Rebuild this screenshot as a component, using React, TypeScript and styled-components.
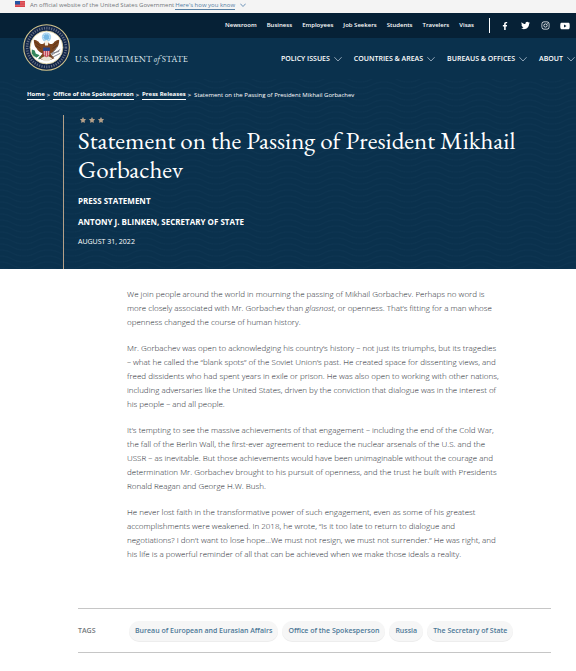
import React from "react";
import styled, { createGlobalStyle } from "styled-components";
import { FaFacebookF, FaTwitter, FaInstagram, FaYoutube, FaStar } from "react-icons/fa";

const waves = encodeURIComponent(
  `<svg xmlns="http://www.w3.org/2000/svg" width="48" height="18" fill="none" stroke="#143c5a" stroke-opacity=".3"><path d="M0 3C12 3 12 9 24 9S36 3 48 3M0 9C12 9 12 15 24 15S36 9 48 9M0 15C12 15 12 21 24 21S36 15 48 15M0-3C12-3 12 3 24 3S36-3 48-3"/></svg>`
);

const GlobalStyle = createGlobalStyle`
  * { box-sizing: border-box; }
  body {
    margin: 0;
    background: #fff;
    color: #24282f;
    font-family: "Open Sans", "Noto Sans", sans-serif;
  }
  a { color: inherit; }
`;

const Banner = styled.div`
  display: flex;
  align-items: center;
  height: 13px;
  padding: 0 15px 3px;
  background: #f4f4f4;
  color: #71767a;
  font-size: 6px;
  line-height: 8px;
`;

const Flag = styled.svg`
  width: 10px;
  height: 6px;
  margin: 0 5px 2px 0;
`;

const BannerButton = styled.button`
  display: flex;
  align-items: center;
  gap: 5px;
  margin-left: 1px;
  padding: 0;
  border: 0;
  background: none;
  color: #5580a5;
  font: inherit;
  span { box-shadow: 0 1px 0 #5580a5; line-height: 7px; }
`;

const Header = styled.header`
  position: relative;
  color: #fff;
`;

const UtilityBar = styled.div`
  display: flex;
  justify-content: flex-end;
  align-items: center;
  height: 25px;
  padding-right: 7px;
  background: #062136;
`;

const UtilityNav = styled.nav`
  display: flex;
  gap: 10px;
  padding-bottom: 1px;
  font-size: 6px;
  font-weight: 600;
  a { text-decoration: none; }
`;

const Social = styled.div`
  display: flex;
  align-items: center;
  height: 15px;
  gap: 12px;
  margin-left: 15px;
  padding-left: 11px;
  border-left: 1px solid #fff;
  a { display: flex; justify-content: center; width: 8px; }
  svg { flex: none; }
`;

const SealLink = styled.a`
  position: absolute;
  top: 11px;
  left: 23px;
  display: flex;
`;

const MainBar = styled.div`
  display: flex;
  justify-content: space-between;
  align-items: center;
  height: 41px;
  padding: 0 1px 0 75px;
  background: #0a314d;
`;

const Wordmark = styled.a`
  color: #dde5ec;
  font-family: "EB Garamond", "Liberation Serif", serif;
  font-size: 9px;
  line-height: 12px;
  text-decoration: none;
  white-space: nowrap;
`;

const MainNav = styled.nav`
  display: flex;
  gap: 12px;
`;

const MenuButton = styled.button`
  display: flex;
  align-items: center;
  gap: 4px;
  padding: 0;
  border: 0;
  background: none;
  color: #fff;
  font-family: inherit;
  font-size: 7px;
  font-weight: 600;
  white-space: nowrap;
`;

const Hero = styled.section`
  padding: 11px 27px 0;
  background: #0a314d url("data:image/svg+xml,${waves}");
  color: #fff;
`;

const Breadcrumb = styled.nav`
  display: flex;
  gap: 2px;
  font-size: 6px;
  font-weight: 500;
  line-height: 10px;
  a {
    border-bottom: 1px solid #fff;
    font-weight: 700;
    line-height: 9px;
    text-decoration: none;
  }
`;

const Separator = styled.span`
  padding-right: 1px;
  font-weight: 600;
`;

const HeroBody = styled.div`
  min-height: 154px;
  margin: 15px 0 0 36px;
  padding-left: 14px;
  border-left: 1px solid #b39f88;
`;

const Stars = styled.div`
  display: flex;
  gap: 3px;
  padding: 2px 0 0 2px;
  color: #b39f88;
`;

const Title = styled.h1`
  margin: 3px 0 12px;
  font-family: "EB Garamond", "Liberation Serif", serif;
  font-size: 25px;
  font-weight: 400;
  line-height: 29px;
`;

const Meta = styled.p<{ $light?: boolean }>`
  margin: 0 0 ${(p) => (p.$light ? 0 : 11)}px;
  font-size: ${(p) => (p.$light ? 7 : 8)}px;
  font-weight: ${(p) => (p.$light ? 500 : 700)};
  line-height: ${(p) => (p.$light ? 8 : 10)}px;
`;

const Article = styled.article`
  padding: 18px 75px 0 127px;
  font-size: 8px;
  font-weight: 300;
  line-height: 14px;
  p { margin: 0 0 12px; }
`;

const Tags = styled.footer`
  display: flex;
  align-items: center;
  height: 45px;
  margin: 47px 25px 18px 78px;
  border: solid #c6c6c6;
  border-width: 1px 0;
`;

const TagsLabel = styled.h2`
  width: 51px;
  margin: 0;
  color: #71767a;
  font-size: 7px;
  font-weight: 600;
`;

const TagList = styled.ul`
  display: flex;
  gap: 4px;
  margin: 0;
  padding: 0;
  list-style: none;
`;

const Tag = styled.a`
  display: block;
  padding: 0 6px;
  border-radius: 10px;
  background: #f6f6f6;
  box-shadow: 0 1px 0 #ededed;
  color: #4d7896;
  font-size: 7px;
  font-weight: 600;
  line-height: 20px;
  text-decoration: none;
  white-space: nowrap;
`;

const Chevron = ({ size = 8, color = "#8fa3b5" }: { size?: number; color?: string }) => (
  <svg width={size} height={size} viewBox="0 0 8 8" fill="none" stroke={color} aria-hidden="true">
    <path d="M.4 2.2 4 6l3.6-3.8" />
  </svg>
);

const Seal = () => (
  <svg width="47" height="47" viewBox="0 0 48 48" role="img" aria-label="Department of State seal">
    <circle cx="24" cy="24" r="23.3" fill="#112548" stroke="#d3c58c" strokeWidth="1.1" />
    <circle cx="24" cy="24" r="19.8" fill="none" stroke="#c6c6c8" strokeWidth="2.6" strokeDasharray="1.2 1.3" opacity=".45" />
    <circle cx="24" cy="24" r="16.8" fill="#fff" stroke="#d3c58c" strokeWidth=".8" />
    <circle cx="24" cy="13.4" r="4.8" fill="#a8d4f0" />
    <circle cx="24" cy="13.4" r="3.2" fill="#78b8e4" stroke="#d9eefb" strokeDasharray="1 1" />
    <path d="M22 19c-2 3-5 1-6-1-2-1-3-2-5-2 0 4 1 7 3 9 1 2 3 4 6 5l-4 5 5 2 3-4 3 4 5-2-4-5c3-1 5-3 6-5 2-2 3-5 3-9-2 0-3 1-5 2-1 2-4 4-6 1z" fill="#7c451f" />
    <path d="m12 18 5 4m-4 0 5 3m18-7-5 4m4 0-5 3" stroke="#53301a" strokeWidth=".8" />
    <path d="m22 18 2-2 2 2-.5 4h-3z" fill="#f5efe3" />
    <path d="m18 35 6-3 6 3-4 3h-4z" fill="#e9e2d2" />
    <path d="M20.500 25h7v5c0 2-2 3-3.500 4-1.500-1-3.500-2-3.500-4z" fill="#c4495a" />
    <path d="M22 27v5m2-5v6m2-6v5" stroke="#f5dede" strokeWidth=".7" />
    <path d="M20.500 24h7v3.500h-7z" fill="#28468a" />
    <path d="m9 26 3 1 1 3 4 2-3 2-3-1-2-3z" fill="#34865b" />
    <path d="m16 32-3 2m5-1-2 3" stroke="#34865b" strokeWidth="1.200" />
    <path d="m29 32 9-6m-9 5 6-8m-5 11 8-4m-9 0 8-2" stroke="#777b85" strokeWidth=".9" />
  </svg>
);

const UTILITY = ["Newsroom", "Business", "Employees", "Job Seekers", "Students", "Travelers", "Visas"];
const MENU = ["POLICY ISSUES", "COUNTRIES & AREAS", "BUREAUS & OFFICES", "ABOUT"];
const TAGS = ["Bureau of European and Eurasian Affairs", "Office of the Spokesperson", "Russia", "The Secretary of State"];

export default function App() {
  return (
    <>
      <GlobalStyle />
      <Banner>
        <Flag viewBox="0 0 10 6" aria-hidden="true">
          <path fill="#d8444c" d="M0 0h10v6H0z" />
          <path stroke="#e98888" strokeWidth=".4" d="M0 1.500h10M0 3h10M0 4.500h10" />
          <path fill="#2454a4" d="M0 0h5v3.500H0z" />
        </Flag>
        An official website of the United States Government
        <BannerButton type="button">
          <span>Here's how you know</span>
          <Chevron size={6} color="#4475a5" />
        </BannerButton>
      </Banner>
      <Header>
        <UtilityBar>
          <UtilityNav aria-label="Utility">
            {UTILITY.map((item) => (
              <a href="#" key={item}>{item}</a>
            ))}
          </UtilityNav>
          <Social>
            <a href="#" aria-label="Facebook"><FaFacebookF size={8} /></a>
            <a href="#" aria-label="Twitter"><FaTwitter size={9} /></a>
            <a href="#" aria-label="Instagram"><FaInstagram size={9} /></a>
            <a href="#" aria-label="YouTube"><FaYoutube size={10} /></a>
          </Social>
        </UtilityBar>
        <MainBar>
          <Wordmark href="#">U.S. DEPARTMENT <i>of</i> STATE</Wordmark>
          <MainNav aria-label="Main">
            {MENU.map((item) => (
              <MenuButton type="button" key={item}>{item}<Chevron /></MenuButton>
            ))}
          </MainNav>
        </MainBar>
        <SealLink href="#"><Seal /></SealLink>
      </Header>
      <main>
        <Hero>
          <Breadcrumb aria-label="Breadcrumb">
            <a href="#">Home</a>
            <Separator>&gt;</Separator>
            <a href="#">Office of the Spokesperson</a>
            <Separator>&gt;</Separator>
            <a href="#">Press Releases</a>
            <Separator>&gt;</Separator>
            <span>Statement on the Passing of President Mikhail Gorbachev</span>
          </Breadcrumb>
          <HeroBody>
            <Stars aria-hidden="true"><FaStar size={6} /><FaStar size={6} /><FaStar size={6} /></Stars>
            <Title>Statement on the Passing of President Mikhail Gorbachev</Title>
            <Meta>PRESS STATEMENT</Meta>
            <Meta>ANTONY J. BLINKEN, SECRETARY OF STATE</Meta>
            <Meta $light>AUGUST 31, 2022</Meta>
          </HeroBody>
        </Hero>
        <Article>
          <p>We join people around the world in mourning the passing of Mikhail Gorbachev. Perhaps no word is more closely associated with Mr. Gorbachev than <i>glasnost</i>, or openness. That’s fitting for a man whose openness changed the course of human history.</p>
          <p>Mr. Gorbachev was open to acknowledging his country’s history – not just its triumphs, but its tragedies – what he called the “blank spots” of the Soviet Union’s past. He created space for dissenting views, and freed dissidents who had spent years in exile or prison. He was also open to working with other nations, including adversaries like the United States, driven by the conviction that dialogue was in the interest of his people – and all people.</p>
          <p>It’s tempting to see the massive achievements of that engagement – including the end of the Cold War, the fall of the Berlin Wall, the first-ever agreement to reduce the nuclear arsenals of the U.S. and the USSR – as inevitable. But those achievements would have been unimaginable without the courage and determination Mr. Gorbachev brought to his pursuit of openness, and the trust he built with Presidents Ronald Reagan and George H.W. Bush.</p>
          <p>He never lost faith in the transformative power of such engagement, even as some of his greatest accomplishments were weakened. In 2018, he wrote, “Is it too late to return to dialogue and negotiations? I don’t want to lose hope…We must not resign, we must not surrender.” He was right, and his life is a powerful reminder of all that can be achieved when we make those ideals a reality.</p>
        </Article>
      </main>
      <Tags>
        <TagsLabel>TAGS</TagsLabel>
        <TagList>
          {TAGS.map((tag) => (
            <li key={tag}><Tag href="#">{tag}</Tag></li>
          ))}
        </TagList>
      </Tags>
    </>
  );
}
